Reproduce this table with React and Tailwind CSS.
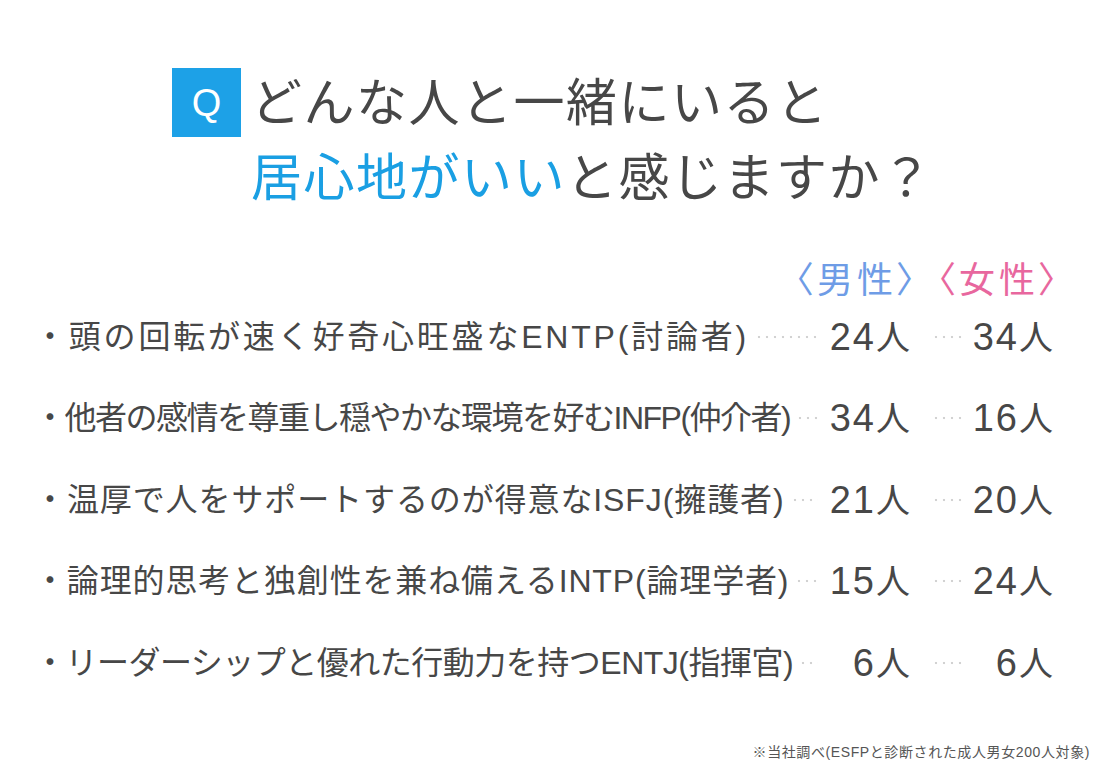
import React from 'react';

const rows = [
  { label: '・頭の回転が速く好奇心旺盛なENTP(討論者)', track: 'tracking-[2.8px]', male: '24', female: '34' },
  { label: '・他者の感情を尊重し穏やかな環境を好むINFP(仲介者)', track: 'tracking-[-1.5px]', male: '34', female: '16' },
  { label: '・温厚で人をサポートするのが得意なISFJ(擁護者)', track: 'tracking-[0.9px]', male: '21', female: '20' },
  { label: '・論理的思考と独創性を兼ね備えるINTP(論理学者)', track: 'tracking-[0.85px]', male: '15', female: '24' },
  { label: '・リーダーシップと優れた行動力を持つENTJ(指揮官)', track: 'tracking-[-0.5px]', male: '6', female: '6' },
];

const dots =
  'h-[6px] bg-[radial-gradient(circle,#d2d2d2_1px,transparent_1.6px)] bg-[length:8px_6px] bg-repeat-x bg-left';

function Count({ n }) {
  return (
    <span className="tracking-[2px]">
      <span className="text-[38px]">{n}</span>
      <span className="text-[34px]">人</span>
    </span>
  );
}

export default function App() {
  return (
    <div
      className="w-[1100px] h-[770px] bg-white text-[#474747] overflow-hidden flex flex-col"
      style={{ fontFamily: '"Liberation Sans", "Noto Sans CJK JP", sans-serif' }}
    >
      {/* Title */}
      <div className="flex items-start pl-[172px] pt-[66px]">
        <div className="w-[69px] h-[69px] mt-[2px] bg-[#1da1e7] flex items-center justify-center text-white text-[38px] leading-none">
          Q
        </div>
        <h1 className="ml-[10px] text-[51px] leading-[75px] font-normal tracking-[1.5px]">
          どんな人と一緒にいると
          <br />
          <span className="text-[#1a9fe3]">居心地がいい</span>と感じますか？
        </h1>
      </div>

      {/* Column headers */}
      <div className="mt-[50px] h-[30px] flex items-center justify-end gap-[18px] pr-[39px] text-[36px] leading-none tracking-[4px] [font-feature-settings:'palt']">
        <span className="text-[#6e9ce6]">〈男性〉</span>
        <span className="text-[#e8679e]">〈女性〉</span>
      </div>

      {/* Rows */}
      <div className="flex flex-col">
        {rows.map((r) => (
          <div key={r.label} className="h-[81.5px] flex items-center pl-[34px] pr-[45px] leading-none">
            <span className={`shrink-0 text-[32px] ${r.track}`}>{r.label}</span>
            <span className={`flex-1 ml-[6px] ${dots}`} />
            <span className="w-[94px] shrink-0 text-right">
              <Count n={r.male} />
            </span>
            <span className={`w-[30px] shrink-0 ml-[20px] ${dots}`} />
            <span className="w-[93px] shrink-0 text-right">
              <Count n={r.female} />
            </span>
          </div>
        ))}
      </div>

      {/* Footnote */}
      <div className="mt-[40px] pr-[10px] text-right text-[14px] leading-[16px] tracking-[0.6px] text-[#555]">
        ※当社調べ(ESFPと診断された成人男女200人対象)
      </div>
    </div>
  );
}
